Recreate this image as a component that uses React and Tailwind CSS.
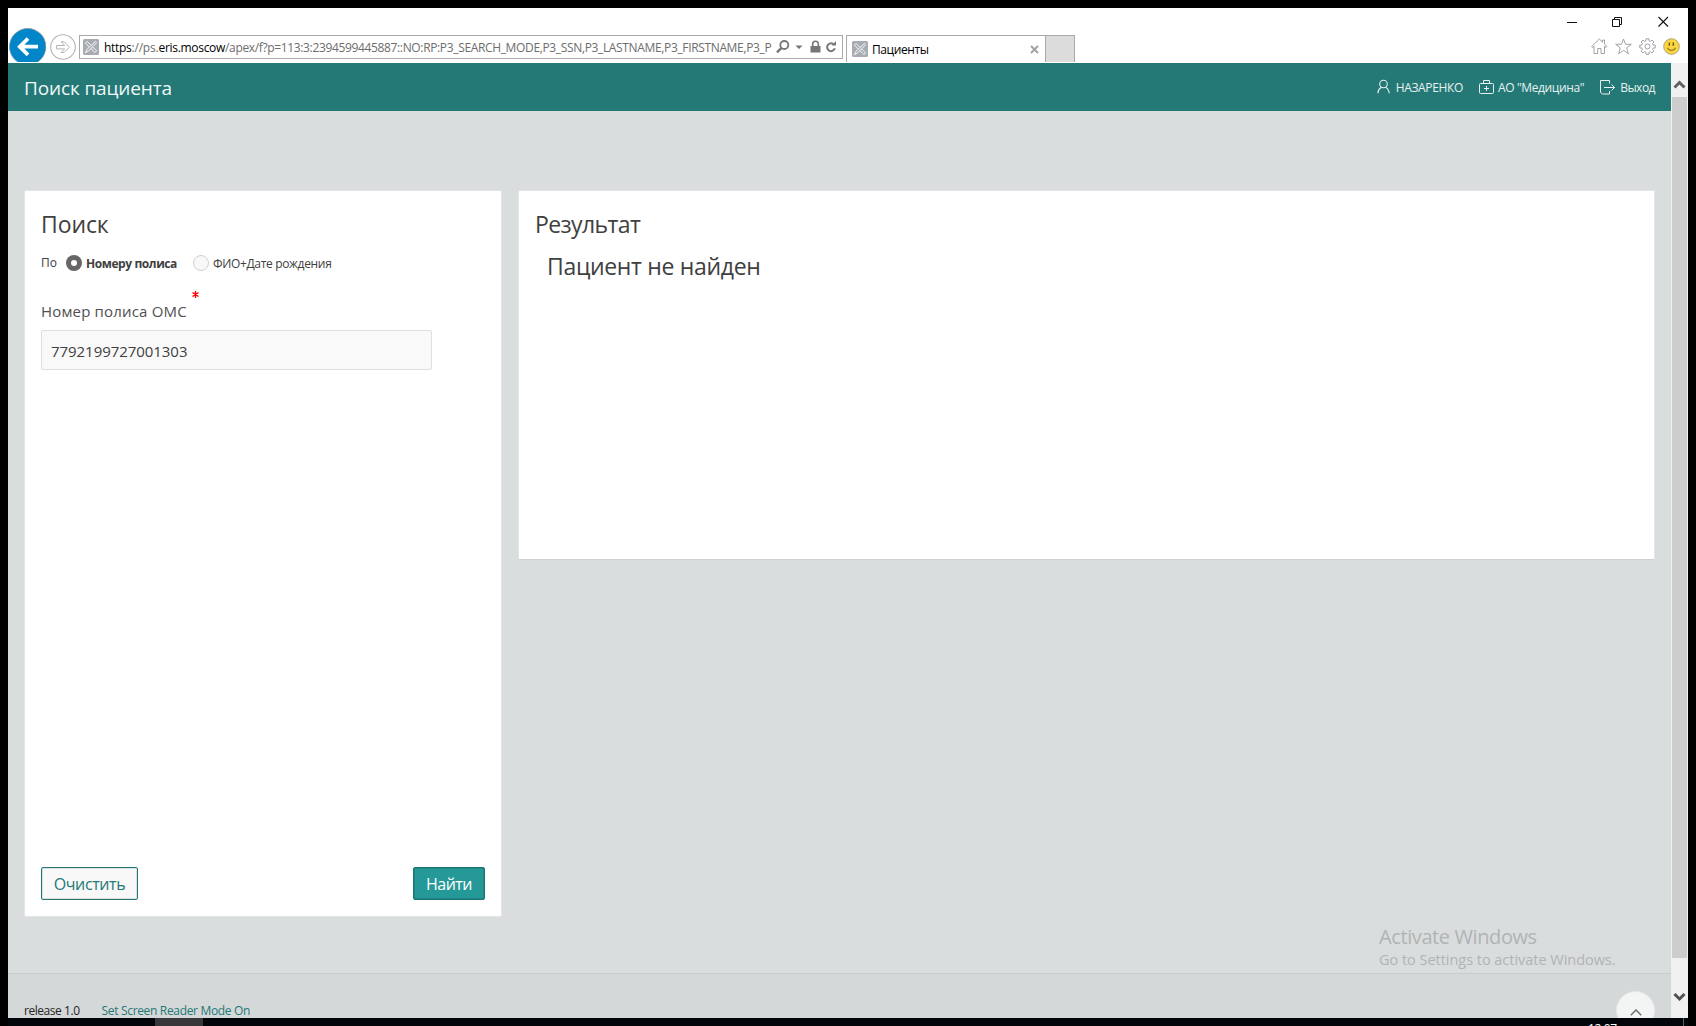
const Favicon = () => (
  <svg width="16" height="16" viewBox="0 0 16 16" className="shrink-0">
    <rect width="16" height="16" rx="1.5" fill="#a7acb3" />
    <g stroke="#fff" strokeWidth="0.9" strokeLinejoin="round" fill="#a7acb3">
      <path d="M2.4 4.100 4.100 2.400 13.600 11.900 11.900 13.600z" />
      <path d="M13.600 3.600 12.400 2.400 4 10.400 2.300 13.700 5.600 12z" />
    </g>
  </svg>
);

const UserIcon = () => (
  <svg width="14" height="16" viewBox="0 0 14 16" fill="none" stroke="#e6f1f0" strokeWidth="1.1" className="shrink-0">
    <circle cx="6.500" cy="5" r="3.800" />
    <path d="M.8 14.200C1 11 2.500 9.400 4.300 8.200M8.700 8.200c2 1.200 3.300 2.800 3.500 6" />
  </svg>
);

const CaseIcon = () => (
  <svg width="16" height="16" viewBox="0 0 16 16" fill="none" stroke="#e6f1f0" className="shrink-0">
    <rect x="0.5" y="4.500" width="14" height="10" rx="1" />
    <path d="M4.500 4.500V1.500h6v3M7.500 7v5M5 9.500h5" />
  </svg>
);

const ExitIcon = () => (
  <svg width="16" height="16" viewBox="0 0 16 16" fill="none" stroke="#e6f1f0" className="shrink-0">
    <path d="M9.500 4.500v-3h-9v12l2 1.500h7v-3M4 8.500h10.500M11.500 5.500l3 3-3 3" />
  </svg>
);

function WindowButtons() {
  return (
    <div className="flex h-[27px] items-center justify-end pr-[19px]">
      <svg width="102" height="12" viewBox="0 0 102 12" fill="none" stroke="#111">
        <path d="M0 6.500h10M45.500 3.500h7v7h-7zM47.500 3.500v-2h7v7h-2" />
        <path d="M91.500 1l9.500 9.500M101 1l-9.500 9.500" strokeWidth="1.100" />
      </svg>
    </div>
  );
}

function ToolIcons() {
  return (
    <div className="ml-auto flex items-center gap-[7px] self-start pr-2 pt-[3px]">
      <svg width="17" height="17" viewBox="0 0 17 17" fill="none" stroke="#999">
        <path d="M.7 8.600 8.300 1l3.200 3.200V2h2v4.200L16 8.600l-1 1-1.500-1.400v7.300h-3.500v-5H6.700v5H3V8.200L1.600 9.600z" strokeWidth="0.9" />
      </svg>
      <svg width="17" height="17" viewBox="0 0 17 17" fill="none" stroke="#999">
        <path d="M8.500 1l2 5.300h5.800l-4.600 3.600 1.700 5.900-4.900-3.500-4.900 3.500 1.700-5.900L.7 6.300h5.800z" strokeWidth="0.9" />
      </svg>
      <svg width="17" height="17" viewBox="0 0 17 17" fill="none" stroke="#999" strokeWidth="0.9">
        <circle cx="8.500" cy="8.500" r="2.500" />
        <path d="M7 .8h3v2l1.500.6L13 2l2 2-1.400 1.500.6 1.500h2v3h-2l-.6 1.500L15 13l-2 2-1.500-1.400-1.500.6v2H7v-2l-1.500-.6L4 15l-2-2 1.400-1.500L2.800 10h-2V7h2l.6-1.500L2 4l2-2 1.500 1.400L7 2.800z" />
      </svg>
      <svg width="17" height="17" viewBox="0 0 17 17">
        <circle cx="8.500" cy="8.500" r="7.800" fill="#fcd53f" stroke="#a39a78" strokeWidth="0.9" />
        <path d="M6.300 4.500v3.200M10.300 4.500v3.200" stroke="#6b5a1c" strokeWidth="1.500" />
        <path d="M4.500 9.800c1.500 3.400 6.500 3.400 8 0" fill="none" stroke="#8f7a25" strokeWidth="1.100" />
      </svg>
    </div>
  );
}

function AddressRow() {
  return (
    <div className="flex h-[28px]">
      <svg width="37" height="34" viewBox="0 0 37 34" className="ml-px -mt-[7px] shrink-0">
        <circle cx="18.700" cy="18.700" r="18.200" fill="#0086c9" stroke="#8a8f94" strokeWidth="0.700" />
        <path d="M29 18.700H11.500M19 10.500l-8.200 8.200 8.200 8.200" fill="none" stroke="#fff" strokeWidth="3.800" />
      </svg>
      <svg width="26" height="26" viewBox="0 0 26 26" fill="none" stroke="#b4b4b4" className="ml-1 -mt-px shrink-0">
        <circle cx="13" cy="13" r="12.300" strokeWidth="1.100" />
        <path d="M6.500 11.500h8.200l-3.500-3.700h3l5.300 5.400-5.300 5.300h-3l3.500-3.600H6.500z" />
      </svg>
      <div className="ml-[3px] flex h-6 w-[764px] shrink-0 items-center border border-[#a9a9a9] bg-white pl-[3px]">
        <Favicon />
        <div className="ml-[5px] mt-[2px] w-[670px] whitespace-nowrap text-xs leading-4 text-[#6d6d6d]">
          <span className="tracking-[-0.300px] text-black">https</span>
          <span className="tracking-[-0.200px]">://ps.</span>
          <span className="tracking-[-0.300px] text-black">eris.moscow</span>
          <span className="tracking-[-0.350px]">/apex/f?p=113:3:2394599445887::NO:RP:P3_SEARCH_MODE,P3_SSN,P3_LASTNAME,P3_FIRSTNAME,P3_P</span>
        </div>
        <svg width="62" height="14" viewBox="0 0 62 14" className="ml-[2px] shrink-0">
          <g fill="none" stroke="#777">
            <circle cx="8.300" cy="5" r="4" strokeWidth="1.800" />
            <path d="M5.500 7.800 1 12.300" strokeWidth="2.500" />
            <path d="M57.500 4.200a3.900 3.900 0 1 0 1.300 4" strokeWidth="2" />
          </g>
          <path d="M19.500 5.500h7l-3.500 3.500zM34.500 6h10v6.500h-10zM55.500 5.600h4.500V1z" fill="#777" />
          <path d="M36.700 6V4a2.800 2.800 0 0 1 5.600 0v2" fill="none" stroke="#777" strokeWidth="1.600" />
        </svg>
      </div>
      <div className="ml-[3px] flex h-[27px] w-[200px] shrink-0 items-center border border-b-0 border-[#a9a9a9] bg-white pl-[5px]">
        <Favicon />
        <span className="ml-1 mt-[2px] text-xs tracking-[-0.400px] text-black">Пациенты</span>
        <svg width="9" height="9" viewBox="0 0 9 9" className="ml-auto mr-[6px]">
          <path d="M1 1l7 7M8 1L1 8" stroke="#a2a2a2" strokeWidth="2" />
        </svg>
      </div>
      <div className="h-[27px] w-[29px] shrink-0 border border-b-0 border-l-0 border-[#a9a9a9] bg-[#dcdcdc]" />
      <ToolIcons />
    </div>
  );
}

function AppHeader() {
  return (
    <header className="flex h-12 shrink-0 items-center bg-[#247977] pl-4 pr-4 text-[#e6f1f0]">
      <h1 className="mt-[2px] text-[19px] tracking-[-0.130px] text-[#f0f7f7]">Поиск пациента</h1>
      <div className="ml-auto flex items-center text-xs">
        <UserIcon />
        <span className="ml-[5px] mr-4 mt-[2px] tracking-[-0.350px]">НАЗАРЕНКО</span>
        <CaseIcon />
        <span className="ml-[3px] mr-4 mt-[2px] tracking-[-0.380px]">АО "Медицина"</span>
        <ExitIcon />
        <span className="ml-[4px] mt-[2px] tracking-[-0.500px]">Выход</span>
      </div>
    </header>
  );
}

function SearchPanel() {
  return (
    <section className="flex h-[727px] w-[478px] shrink-0 flex-col rounded-[2px] border border-[#e3e6e6] bg-white px-4 pb-4 text-[#404040]">
      <h2 className="mt-[17px] text-[23px] leading-8 tracking-[-0.100px]">Поиск</h2>
      <div className="mt-[15px] flex h-4 items-center text-xs leading-4">
        <span>По</span>
        <span className="ml-[9px] flex size-4 items-center justify-center rounded-full bg-[#666]">
          <span className="size-[6px] rounded-full bg-white" />
        </span>
        <span className="ml-1 mt-[2px] font-bold tracking-[-0.420px]">Номеру полиса</span>
        <span className="ml-4 size-4 rounded-full border border-[#cfcfcf] bg-[#f8f8f8]" />
        <span className="ml-1 mt-[2px] tracking-[-0.330px]">ФИО+Дате рождения</span>
      </div>
      <div className="mt-[19px] flex h-10">
        <label className="mt-[10px] self-start text-[15px] leading-[22px] tracking-[0.170px] text-[#505050]">Номер полиса ОМС</label>
        <svg width="7" height="7" viewBox="0 0 7 7" className="ml-[5px] mt-px">
          <path d="M3.500 0v7M.5 1.500l6 4M6.500 1.500l-6 4" stroke="#f00" strokeWidth="1.400" />
        </svg>
      </div>
      <div className="flex h-10 w-[391px] items-center rounded-[2px] border border-[#dfdfdf] bg-[#f9f9f9] pl-[9px] text-[15px] tracking-[-0.050px] text-[#404040]">
        <span className="mt-[2px]">7792199727001303</span>
      </div>
      <div className="mt-auto flex justify-between text-base">
        <button className="flex h-[33px] w-[97px] items-center justify-center rounded-[2px] border border-[#247977] bg-[#f8f8f8] tracking-[-0.400px] text-[#247977] shadow-[inset_0_0_0_1px_#dcdfdf]">Очистить</button>
        <button className="flex h-[33px] w-[72px] items-center justify-center rounded-[2px] border border-[#1d7573] bg-[#259997] tracking-[-0.550px] text-white shadow-[inset_0_0_0_1px_#1f8886]">Найти</button>
      </div>
    </section>
  );
}

function ResultPanel() {
  return (
    <section className="h-[370px] w-[1137px] shrink-0 rounded-[2px] border border-[#e3e6e6] border-b-[#cdd1d1] bg-white px-4 text-[#404040]">
      <h2 className="mt-[17px] text-[23px] leading-8 tracking-[-0.600px]">Результат</h2>
      <p className="ml-3 mt-[10px] text-[23px] leading-8 tracking-[-0.320px]">Пациент не найден</p>
    </section>
  );
}

function Footer() {
  return (
    <footer className="relative flex h-[45px] shrink-0 items-start overflow-hidden border-t border-[#c8cccc] bg-[#d4d8d8] pl-4 pt-[28px] text-xs leading-[18px]">
      <span className="tracking-[-0.450px] text-[#262626]">release 1.0</span>
      <span className="ml-[22px] tracking-[-0.330px] text-[#247977]">Set Screen Reader Mode On</span>
      <div className="absolute left-[1608px] top-[17px] flex size-[39px] justify-center rounded-full border border-[#e6e9e9] bg-[#f3f5f5]">
        <svg width="12" height="7" viewBox="0 0 12 7" className="mt-[17px]">
          <path d="M.8 6.200 6 1l5.200 5.200" fill="none" stroke="#707070" strokeWidth="1.500" />
        </svg>
      </div>
    </footer>
  );
}

function Scrollbar() {
  return (
    <div className="flex w-[17px] shrink-0 flex-col items-center bg-[#f0f0f0]">
      <svg width="17" height="34" viewBox="0 0 17 34"><path d="M3.500 24.500 8.500 19.500l5 5" fill="none" stroke="#606060" strokeWidth="3" /></svg>
      <div className="h-[861px] w-[15px] bg-[#cdcdcd]" />
      <svg width="17" height="60" viewBox="0 0 17 60"><path d="M3.500 36l5 5 5-5" fill="none" stroke="#505050" strokeWidth="3" /></svg>
    </div>
  );
}

export default function App() {
  return (
    <div className="h-[1026px] w-[1696px] overflow-hidden bg-black px-2 pt-2 font-['Open_Sans','Noto_Sans',sans-serif]">
      <div className="flex h-[1010px] flex-col overflow-hidden bg-white">
        <WindowButtons />
        <AddressRow />
        <div className="flex h-[955px]">
          <div className="flex min-w-0 grow flex-col bg-[#d9dddd]">
            <AppHeader />
            <main className="flex h-[862px] shrink-0 items-start gap-4 pl-4 pt-[79px]">
              <SearchPanel />
              <ResultPanel />
            </main>
            <Footer />
          </div>
          <Scrollbar />
        </div>
      </div>
      <div className="relative flex h-2 overflow-hidden bg-[#020509] pl-[147px]">
        <div className="h-2 w-12 bg-[#37373a]" />
        <span className="absolute left-[1580px] top-[3px] text-xs leading-4 tracking-[-0.400px] text-white">12:07</span>
        <span className="absolute left-[1675px] top-0 h-2 w-px bg-[#5a5d60]" />
      </div>
      <div className="pointer-events-none absolute left-[1379px] top-[922px] text-[#b0b4b4]">
        <div className="text-[20px] leading-[30px] tracking-[-0.400px]">Activate Windows</div>
        <div className="text-[14.500px] leading-4 tracking-[-0.030px]">Go to Settings to activate Windows.</div>
      </div>
    </div>
  );
}
